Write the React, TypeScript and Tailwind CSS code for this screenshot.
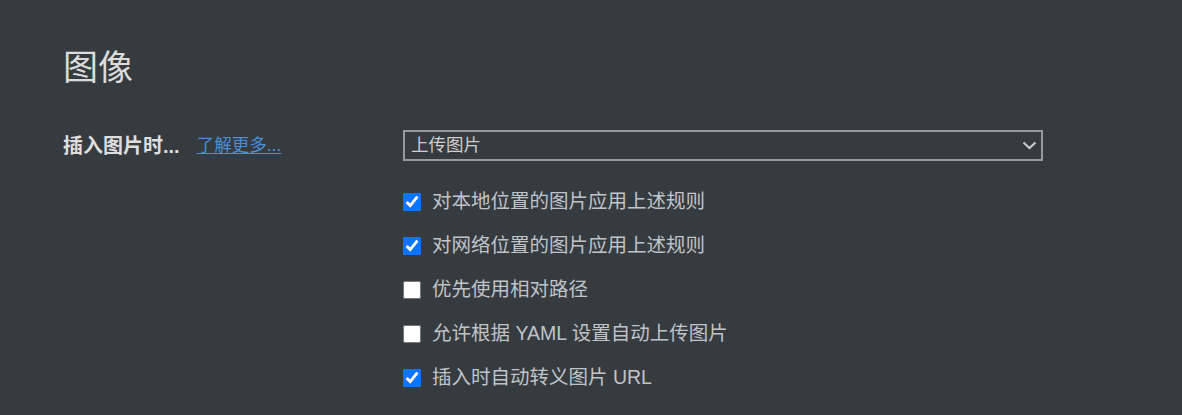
const options = [
  { label: '对本地位置的图片应用上述规则', checked: true },
  { label: '对网络位置的图片应用上述规则', checked: true },
  { label: '优先使用相对路径', checked: false },
  { label: '允许根据 YAML 设置自动上传图片', checked: false },
  { label: '插入时自动转义图片 URL', checked: true },
];

export default function App() {
  return (
    <div
      className="h-[415px] w-full overflow-hidden bg-[#363b40] pl-[63px] pt-[46px]"
      style={{ fontFamily: '"Liberation Sans", "Noto Sans CJK SC", sans-serif' }}
    >
      <h1 className="text-[35px] leading-[44px] text-[#dcdcdc]">图像</h1>

      <div className="mt-[40px] flex items-center">
        <div className="flex w-[340px] items-center">
          <span className="text-[20px] font-bold text-[#dedede]">插入图片时...</span>
          <a href="#" className="ml-[17px] text-[17.5px] text-[#4a8fd8] underline underline-offset-2">
            了解更多...
          </a>
        </div>
        <div className="relative flex h-[31px] w-[640px] items-center border-2 border-[#9a9a9a] pl-[6px]">
          <span className="text-[17.5px] text-[#cfcfcf]">上传图片</span>
          <svg
            className="absolute right-[4px] top-[9px]"
            width="15"
            height="9"
            viewBox="0 0 15 9"
            fill="none"
          >
            <path d="M1.5 1.5 L7.5 7 L13.5 1.5" stroke="#c4c8cc" strokeWidth="2.2" />
          </svg>
        </div>
      </div>

      <div className="ml-[340px] mt-[19px] flex flex-col">
        {options.map((o) => (
          <label key={o.label} className="flex h-[44px] items-center">
            <input
              type="checkbox"
              defaultChecked={o.checked}
              className="m-0 h-[18px] w-[18px] accent-[#0a74ff]"
            />
            <span className="ml-[11px] text-[19.5px] text-[#c0c4c8]">{o.label}</span>
          </label>
        ))}
      </div>
    </div>
  );
}
